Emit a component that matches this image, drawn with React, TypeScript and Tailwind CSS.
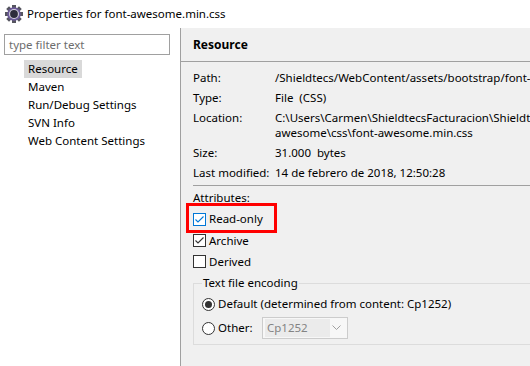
import React from "react";

function Check({ blue = false, checked = true }: { blue?: boolean; checked?: boolean }) {
  const c = blue ? "#0078d7" : "#333333";
  return (
    <svg width="13" height="13" viewBox="0 0 13 13" className="shrink-0">
      <rect x="0.5" y="0.5" width="12" height="12" fill="#ffffff" stroke={c} />
      {checked && <polyline points="2.5,6.5 5,9 10.5,3.5" fill="none" stroke={c} strokeWidth="1.1" />}
    </svg>
  );
}

function Radio({ on }: { on: boolean }) {
  return (
    <svg width="13" height="13" viewBox="0 0 13 13" className="shrink-0">
      <circle cx="6.5" cy="6.5" r="6" fill="#ffffff" stroke="#333333" />
      {on && <circle cx="6.5" cy="6.5" r="3.5" fill="#333333" />}
    </svg>
  );
}

function Gear() {
  const teeth = [];
  for (let i = 0; i < 8; i++) {
    teeth.push(
      <rect key={i} x="7" y="0" width="4" height="4.5" fill="#55555f" transform={`rotate(${i * 45} 9 9)`} />
    );
  }
  return (
    <svg width="18" height="18" viewBox="0 0 18 18">
      {teeth}
      <circle cx="9" cy="9" r="6.8" fill="#6c5a9a" />
      <circle cx="9" cy="9" r="5" fill="#d4d2dc" />
      <circle cx="9" cy="9" r="3.9" fill="#2e2c3c" />
    </svg>
  );
}

export default function App() {
  const rows: [string, React.ReactNode][] = [
    ["Path:", "/Shieldtecs/WebContent/assets/bootstrap/font-awesome/css/font-awesome.min.css"],
    ["Type:", "File  (CSS)"],
    [
      "Location:",
      <>
        <div className="whitespace-nowrap">C:\Users\Carmen\ShieldtecsFacturacion\Shieldtecs\WebContent\assets\bootstrap\font-</div>
        <div className="whitespace-nowrap">awesome\css\font-awesome.min.css</div>
      </>,
    ],
    ["Size:", "31.000  bytes"],
    ["Last modified:", "14 de febrero de 2018, 12:50:28"],
  ];
  return (
    <div
      className="relative w-[530px] h-[366px] overflow-hidden flex flex-col bg-white text-[11.5px] text-black"
      style={{ fontFamily: "'Noto Sans', 'Open Sans', sans-serif" }}
    >
      <div className="h-[28px] shrink-0 flex items-center pl-[5px] gap-[4px]">
        <Gear />
        <span className="whitespace-pre">Properties for font-awesome.min.css</span>
      </div>
      <div className="flex flex-1 min-h-0">
        <div className="w-[181px] shrink-0 bg-white border-r border-[#a0a0a0]">
          <div className="ml-[4px] mt-[6px] w-[166px] h-[21px] border border-[#a0a0a0] flex items-center pl-[4px] text-[#6d6d6d]">
            type filter text
          </div>
          <div className="mt-[5px] flex flex-col">
            {["Resource", "Maven", "Run/Debug Settings", "SVN Info", "Web Content Settings"].map((t, i) => (
              <div key={t} className="h-[18px] flex items-center pl-[24px]">
                <span className={`px-[4px] h-[18px] flex items-center whitespace-nowrap ${i === 0 ? "bg-[#d9d9d9]" : ""}`}>{t}</span>
              </div>
            ))}
          </div>
        </div>
        <div className="flex-1 min-w-0 bg-[#f0f0f0] flex flex-col overflow-hidden">
          <div className="h-[34px] shrink-0 flex items-center pl-[12px] text-[12px] font-bold border-b border-[#a0a0a0]">Resource</div>
          <div className="pl-[12px] pt-[8px] flex flex-col gap-[5px] leading-[15px]">
            {rows.map(([l, v]) => (
              <div key={l} className="flex">
                <div className="w-[82px] shrink-0 whitespace-nowrap">{l}</div>
                <div className="whitespace-pre">{v}</div>
              </div>
            ))}
          </div>
          <div className="ml-[12px] mt-[5px] h-px bg-[#a0a0a0]" />
          <div className="pl-[12px] mt-[4px] leading-[15px]">Attributes:</div>
          <div className="pl-[12px] mt-[3px] flex flex-col">
            <div className="h-[22px] flex items-center gap-[3px]">
              <Check blue />
              <span>Read-only</span>
            </div>
            <div className="h-[21px] flex items-center gap-[3px]">
              <Check />
              <span>Archive</span>
            </div>
            <div className="h-[21px] flex items-center gap-[3px]">
              <Check checked={false} />
              <span>Derived</span>
            </div>
          </div>
          <div className="ml-[12px] mt-[11px] w-[340px] h-[62px] shrink-0 border border-[#dcdcdc] relative">
            <div className="absolute left-[8px] top-[-9px] px-[1px] bg-[#f0f0f0] leading-[16px]">Text file encoding</div>
            <div className="pl-[8px] pt-[10px] flex flex-col">
              <div className="h-[20px] flex items-center gap-[3px]">
                <Radio on />
                <span>Default (determined from content: Cp1252)</span>
              </div>
              <div className="h-[24px] mt-[2px] flex items-center">
                <Radio on={false} />
                <span className="ml-[3px] w-[44px]">Other:</span>
                <div className="w-[86px] h-[22px] border border-[#cccccc] bg-[#f7f7f7] flex items-center pl-[2px] pr-[6px]">
                  <div className="h-[18px] w-[65px] bg-[#ebebeb] text-[#838383] flex items-center pl-[2px]">Cp1252</div>
                  <svg width="9" height="6" viewBox="0 0 9 6" className="ml-auto">
                    <polyline points="0.5,0.5 4.5,4.5 8.5,0.5" fill="none" stroke="#a0a0a0" />
                  </svg>
                </div>
              </div>
            </div>
          </div>
        </div>
      </div>
      <div className="absolute left-[186px] top-[203px] w-[91px] h-[30px] border-[3px] border-[#ff0000]" />
    </div>
  );
}
